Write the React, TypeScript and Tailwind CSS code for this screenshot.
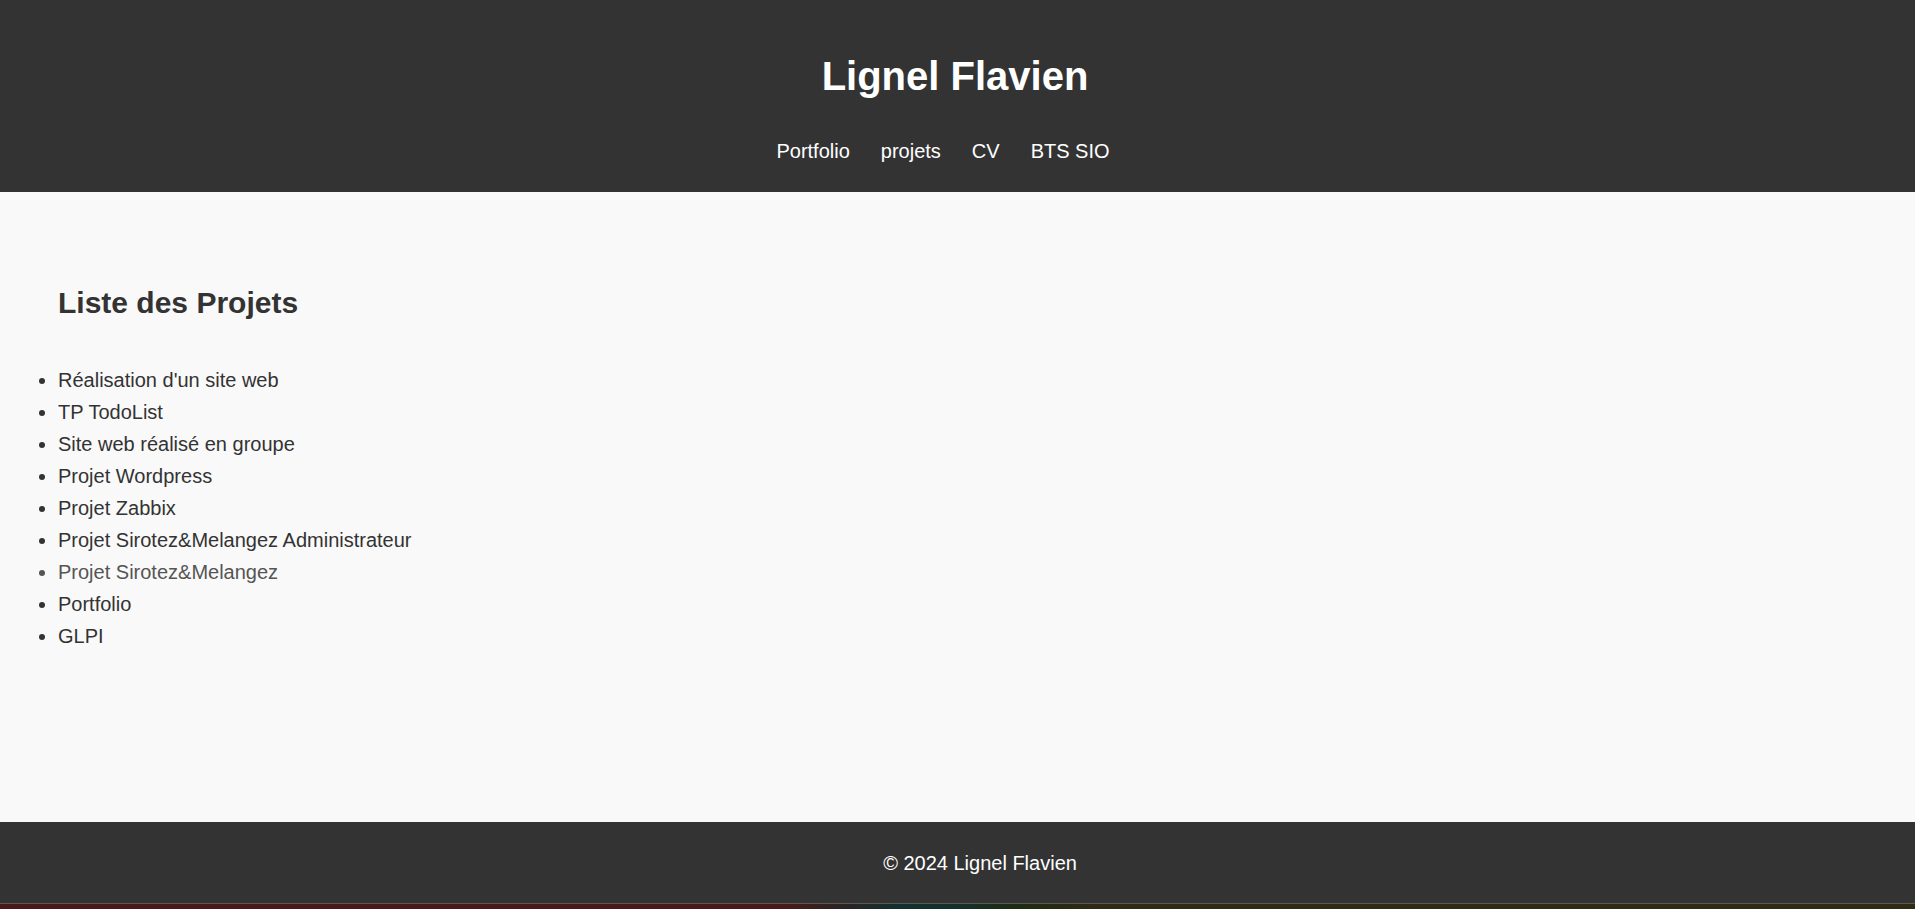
import React from "react";

const projets = [
  "Réalisation d'un site web",
  "TP TodoList",
  "Site web réalisé en groupe",
  "Projet Wordpress",
  "Projet Zabbix",
  "Projet Sirotez&Melangez Administrateur",
  "Projet Sirotez&Melangez",
  "Portfolio",
  "GLPI",
];

export default function App() {
  return (
    <div className="flex h-[909px] flex-col overflow-hidden font-['Liberation_Sans',Arial,sans-serif] text-[#333333]">
      <header className="flex h-[192px] shrink-0 flex-col items-center bg-[#333333] pt-[52px] text-white">
        <h1 className="mr-[5px] text-[40px] font-bold leading-[48px]">Lignel Flavien</h1>
        <nav className="mt-[35px] flex justify-center pl-[2px]">
          {["Portfolio", "projets", "CV", "BTS SIO"].map((n) => (
            <a key={n} className="mr-[31px] text-[20px] leading-[32px] text-white">
              {n}
            </a>
          ))}
        </nav>
      </header>
      <main className="h-[630px] shrink-0 bg-[#f9f9f9]">
        <h2 className="ml-[58px] mt-[93px] text-[30px] font-bold leading-[36px] text-[#333333]">
          Liste des Projets
        </h2>
        <ul className="mt-[43px] list-disc pl-[58px] text-[20px] leading-[32px]">
          {projets.map((p, i) => (
            <li key={p} className={i === 6 ? "text-[#555555]" : "text-[#333333]"}>
              {p}
            </li>
          ))}
        </ul>
      </main>
      <footer className="flex h-[81px] shrink-0 items-center justify-center bg-[#333333] pl-[45px] text-[20px] leading-[32px] text-white">
        © 2024 Lignel Flavien
      </footer>
      <div className="h-px shrink-0 bg-[#5a5a52]" />
      <div className="h-[5px] shrink-0 bg-[linear-gradient(to_right,#4a1a18_0%,#4a1a18_41%,#2a2424_44%,#12302f_47%,#13302c_50%,#1f2a12_53%,#2e2a14_57%,#2e2a14_100%)]" />
    </div>
  );
}
